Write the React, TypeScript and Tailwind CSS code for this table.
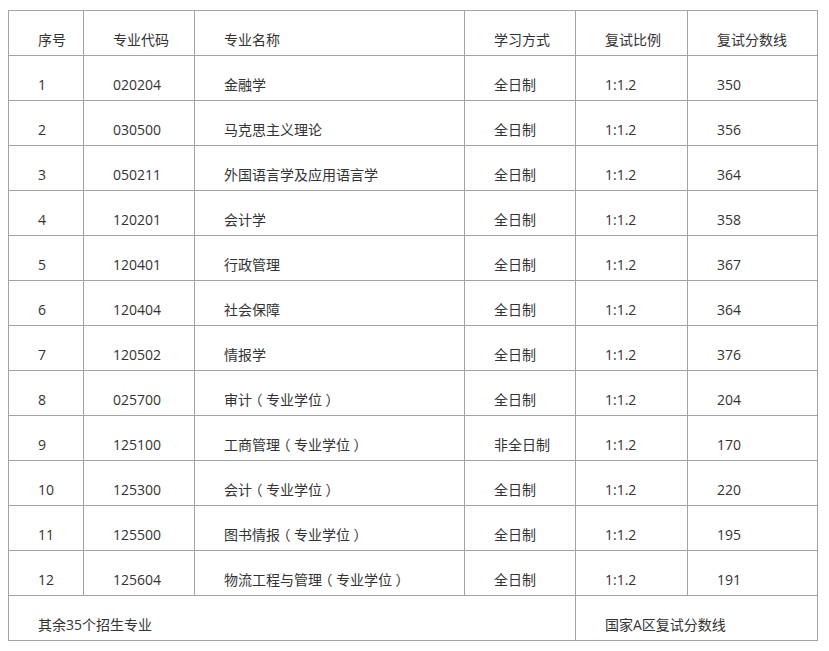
const rows: [string, string, string, string, string, string][] = [
	["1", "020204", "金融学", "全日制", "1:1.2", "350"],
	["2", "030500", "马克思主义理论", "全日制", "1:1.2", "356"],
	["3", "050211", "外国语言学及应用语言学", "全日制", "1:1.2", "364"],
	["4", "120201", "会计学", "全日制", "1:1.2", "358"],
	["5", "120401", "行政管理", "全日制", "1:1.2", "367"],
	["6", "120404", "社会保障", "全日制", "1:1.2", "364"],
	["7", "120502", "情报学", "全日制", "1:1.2", "376"],
	["8", "025700", "审计（专业学位）", "全日制", "1:1.2", "204"],
	["9", "125100", "工商管理（专业学位）", "非全日制", "1:1.2", "170"],
	["10", "125300", "会计（专业学位）", "全日制", "1:1.2", "220"],
	["11", "125500", "图书情报（专业学位）", "全日制", "1:1.2", "195"],
	["12", "125604", "物流工程与管理（专业学位）", "全日制", "1:1.2", "191"],
];

const headers = ["序号", "专业代码", "专业名称", "学习方式", "复试比例", "复试分数线"];
const widths = [75, 111, 270, 111, 112, 130];

const cell =
	"border border-[#a3a3a3] pl-[29px] pr-1 pt-[19px] pb-[5px] text-left align-top font-normal leading-[20px] whitespace-nowrap";

// full-width parens sit centred in their box in the original font
const paren = "inline-block w-[14px] text-center [font-feature-settings:'halt']";

function Name({ text }: { text: string }) {
	const m = text.match(/^(.*)（(.*)）$/);
	if (!m) return <>{text}</>;
	return (
		<>
			{m[1]}
			<span className={paren}>（</span>
			{m[2]}
			<span className={paren}>）</span>
		</>
	);
}

export default function App() {
	return (
		<div
			className="min-h-screen bg-white pl-[8px] pt-[10px] text-[14px] text-[#333]"
			style={{ fontFamily: '"Open Sans", "Noto Sans CJK SC", sans-serif' }}
		>
			<table className="w-[810px] table-fixed border-collapse">
				<colgroup>
					{widths.map((w, i) => (
						<col key={i} style={{ width: w }} />
					))}
				</colgroup>
				<thead>
					<tr>
						{headers.map((h) => (
							<th key={h} className={cell}>
								{h}
							</th>
						))}
					</tr>
				</thead>
				<tbody>
					{rows.map((r) => (
						<tr key={r[0]}>
							{r.map((v, i) => (
								<td key={i} className={cell}>
									{i === 2 ? <Name text={v} /> : v}
								</td>
							))}
						</tr>
					))}
					<tr>
						<td colSpan={4} className={cell}>
							其余35个招生专业
						</td>
						<td colSpan={2} className={cell}>
							国家A区复试分数线
						</td>
					</tr>
				</tbody>
			</table>
		</div>
	);
}
